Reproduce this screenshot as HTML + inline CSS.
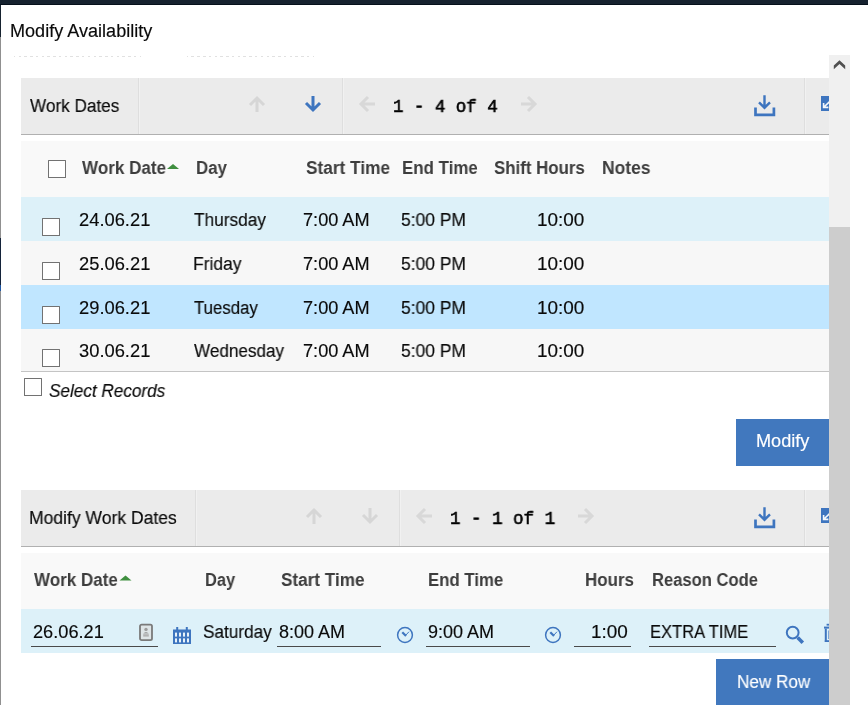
<!DOCTYPE html>
<html>
<head>
<meta charset="utf-8">
<title>Modify Availability</title>
<style>
*{box-sizing:border-box;margin:0;padding:0}
html,body{width:868px;height:705px;overflow:hidden;background:#fff}
body{position:relative;font-family:"Liberation Sans",sans-serif;color:#161616;font-size:18px}
.a{position:absolute}
.t{position:absolute;white-space:nowrap;line-height:20px;height:20px;transform-origin:0 0;will-change:transform;font-size:18px}
.r{color:#0a0a0a;-webkit-text-stroke:0.15px #0a0a0a}
.b{font-weight:bold;color:#3d3d3d}
.i{font-style:italic;color:#0a0a0a;-webkit-text-stroke:0.15px #0a0a0a}
.w{color:#fff;-webkit-text-stroke:0.15px #fff}
.m{font-family:"Liberation Mono",monospace;-webkit-text-stroke:0.6px #000;color:#000}
.cb{position:absolute;width:18px;height:18px;border:1px solid #727272;background:#fff;border-radius:0.5px}
.tb{position:absolute;left:21px;width:808px;height:57px;background:#ebebeb;border-bottom:1px solid #b0b0b0}
.sep{position:absolute;width:2px;background:#f1f1f1;border-left:1px solid #dedede;top:0;height:56px}
.hd{position:absolute;left:21px;width:808px;height:56px;background:#f9f9f9}
.row{position:absolute;left:21px;width:808px;height:44px}
.ul{position:absolute;height:1px;background:#4a4a4a}
.btn{position:absolute;background:#4178be}
svg{position:absolute;left:0;top:0;overflow:visible}
</style>
</head>
<body>
<!-- top bar + left edge -->
<div class="a" style="left:0;top:0;width:868px;height:5px;background:#16222f;border-bottom:1px solid #06101b"></div>
<div class="a" style="left:0;top:5px;width:1px;height:700px;background:#909090"></div>
<div class="a" style="left:0;top:5px;width:1px;height:32px;background:#16222f"></div>
<div class="a" style="left:0;top:238px;width:1px;height:53px;background:#14233a"></div><div class="a" style="left:0;top:285px;width:1px;height:6px;background:#1f57a4"></div>

<div class="a" style="left:14px;top:56px;width:127px;height:1px;background:repeating-linear-gradient(90deg,#e1e1e1 0,#e1e1e1 1.2px,transparent 1.2px,transparent 4.5px,#e1e1e1 4.5px,#e1e1e1 5.77px)"></div>
<div class="a" style="left:187px;top:56px;width:127px;height:1px;background:repeating-linear-gradient(90deg,#e1e1e1 0,#e1e1e1 1.2px,transparent 1.2px,transparent 4.5px,#e1e1e1 4.5px,#e1e1e1 5.77px)"></div>

<!-- toolbar 1 -->
<div class="tb" style="top:78px">
  <div class="sep" style="left:117px"></div>
  <div class="sep" style="left:321px"></div>
  <div class="sep" style="left:783px"></div>
</div>

<!-- header 1 -->
<div class="hd" style="top:141px"></div>
<div class="cb" style="left:48px;top:160px"></div>

<!-- rows -->
<div class="row" style="top:197px;background:#ddf1f9"></div>
<div class="row" style="top:241px;background:#f7f7f7"></div>
<div class="row" style="top:285px;background:#c0e6ff"></div>
<div class="row" style="top:329px;height:43px;background:#f7f7f7;border-bottom:1px solid #c4c4c4"></div>

<div class="cb" style="left:42px;top:218px"></div>
<div class="cb" style="left:42px;top:262px"></div>
<div class="cb" style="left:42px;top:306px"></div>
<div class="cb" style="left:42px;top:349px"></div>
<div class="cb" style="left:24px;top:378px"></div>

<div class="btn" style="left:736px;top:419px;width:93px;height:47px"></div>

<!-- toolbar 2 -->
<div class="tb" style="top:490px">
  <div class="sep" style="left:174px"></div>
  <div class="sep" style="left:378px"></div>
  <div class="sep" style="left:783px"></div>
</div>

<!-- header 2 -->
<div class="hd" style="top:553px"></div>

<div class="row" style="top:609px;background:#ddf1f9"></div>
<div class="ul" style="left:31px;top:646px;width:127px"></div>
<div class="ul" style="left:277px;top:646px;width:104px"></div>
<div class="ul" style="left:426px;top:646px;width:104px"></div>
<div class="ul" style="left:574px;top:646px;width:57px"></div>
<div class="ul" style="left:649px;top:646px;width:127px"></div>

<div class="btn" style="left:716px;top:659px;width:113px;height:46px"></div>

<div class="t r" style="left:10.20px;top:21.00px;transform:scaleX(1.0043)">Modify Availability</div>
<div class="t r" style="left:30.00px;top:96.00px;transform:scaleX(0.9521)">Work Dates</div>
<div class="t m" style="left:392.73px;top:96.00px;transform:scale(0.9692,1.067)">1 - 4 of 4</div>
<div class="t b" style="left:81.50px;top:158.00px;transform:scaleX(0.9466)">Work Date</div>
<div class="t b" style="left:196.06px;top:158.00px;transform:scaleX(0.9375)">Day</div>
<div class="t b" style="left:305.75px;top:158.00px;transform:scaleX(0.9574)">Start Time</div>
<div class="t b" style="left:402.06px;top:158.00px;transform:scaleX(0.9375)">End Time</div>
<div class="t b" style="left:493.75px;top:158.00px;transform:scaleX(0.9356)">Shift Hours</div>
<div class="t b" style="left:602.03px;top:158.00px;transform:scaleX(0.9694)">Notes</div>
<div class="t r" style="left:79.25px;top:210.00px;transform:scaleX(1.0179)">24.06.21</div>
<div class="t r" style="left:194.25px;top:210.00px;transform:scaleX(0.9600)">Thursday</div>
<div class="t r" style="left:303.25px;top:210.00px;transform:scaleX(1.0077)">7:00 AM</div>
<div class="t r" style="left:400.50px;top:210.00px;transform:scaleX(0.9697)">5:00 PM</div>
<div class="t r" style="left:536.95px;top:210.00px;transform:scaleX(1.0511)">10:00</div>
<div class="t r" style="left:79.25px;top:254.00px;transform:scaleX(1.0179)">25.06.21</div>
<div class="t r" style="left:193.28px;top:254.00px;transform:scaleX(0.9694)">Friday</div>
<div class="t r" style="left:303.25px;top:254.00px;transform:scaleX(1.0077)">7:00 AM</div>
<div class="t r" style="left:400.50px;top:254.00px;transform:scaleX(0.9697)">5:00 PM</div>
<div class="t r" style="left:536.95px;top:254.00px;transform:scaleX(1.0511)">10:00</div>
<div class="t r" style="left:79.25px;top:298.00px;transform:scaleX(1.0179)">29.06.21</div>
<div class="t r" style="left:194.25px;top:298.00px;transform:scaleX(0.9348)">Tuesday</div>
<div class="t r" style="left:303.25px;top:298.00px;transform:scaleX(1.0077)">7:00 AM</div>
<div class="t r" style="left:400.50px;top:298.00px;transform:scaleX(0.9697)">5:00 PM</div>
<div class="t r" style="left:536.95px;top:298.00px;transform:scaleX(1.0511)">10:00</div>
<div class="t r" style="left:79.25px;top:341.00px;transform:scaleX(1.0179)">30.06.21</div>
<div class="t r" style="left:194.25px;top:341.00px;transform:scaleX(0.9500)">Wednesday</div>
<div class="t r" style="left:303.25px;top:341.00px;transform:scaleX(1.0077)">7:00 AM</div>
<div class="t r" style="left:400.50px;top:341.00px;transform:scaleX(0.9697)">5:00 PM</div>
<div class="t r" style="left:536.95px;top:341.00px;transform:scaleX(1.0511)">10:00</div>
<div class="t i" style="left:48.75px;top:381.00px;transform:scaleX(0.9529)">Select Records</div>
<div class="t w" style="left:756.39px;top:431.00px;transform:scaleX(1.0077)">Modify</div>
<div class="t r" style="left:29.03px;top:508.00px;transform:scaleX(0.9735)">Modify Work Dates</div>
<div class="t m" style="left:449.73px;top:508.00px;transform:scale(0.9738,1.067)">1 - 1 of 1</div>
<div class="t b" style="left:34.25px;top:570.00px;transform:scaleX(0.9438)">Work Date</div>
<div class="t b" style="left:204.84px;top:570.00px;transform:scaleX(0.9141)">Day</div>
<div class="t b" style="left:280.75px;top:570.00px;transform:scaleX(0.9517)">Start Time</div>
<div class="t b" style="left:428.32px;top:570.00px;transform:scaleX(0.9313)">End Time</div>
<div class="t b" style="left:584.81px;top:570.00px;transform:scaleX(0.9412)">Hours</div>
<div class="t b" style="left:651.58px;top:570.00px;transform:scaleX(0.9211)">Reason Code</div>
<div class="t r" style="left:33.00px;top:622.00px;transform:scaleX(1.0107)">26.06.21</div>
<div class="t r" style="left:203.00px;top:622.00px;transform:scaleX(0.9549)">Saturday</div>
<div class="t r" style="left:279.25px;top:622.00px;transform:scaleX(1.0000)">8:00 AM</div>
<div class="t r" style="left:427.50px;top:622.00px;transform:scaleX(1.0000)">9:00 AM</div>
<div class="t r" style="left:591.45px;top:622.00px;transform:scaleX(1.0515)">1:00</div>
<div class="t r" style="left:649.58px;top:622.00px;transform:scaleX(0.9198)">EXTRA TIME</div>
<div class="t w" style="left:736.55px;top:672.00px;transform:scaleX(0.9513)">New Row</div>

<!-- icons -->
<svg width="868" height="705" viewBox="0 0 868 705">
  <defs>
    <g id="arr"><path d="M0 -8V6M-7 -1L0 6L7 -1" fill="none" stroke-width="3" stroke-linejoin="miter"/></g>
    <g id="dl"><path d="M-9 3V10.3H9.4V3" fill="none" stroke-width="2.7"/><path d="M0 -9.3V3M-5.5 -2.2L0 3.2L5.5 -2.2" fill="none" stroke-width="2.4"/></g>
    <g id="clk"><circle cx="0" cy="0" r="7.4" fill="none" stroke-width="1.5"/><path d="M1 1L-2.7 -2.7" stroke-width="2.2" fill="none"/><path d="M0.4 0.6L4 -3.3" stroke-width="1" fill="none"/></g>
    <g id="sort"><path d="M0 5L6 0L12 5Z" fill="#3f8f3f"/></g>
    <g id="exp"><rect x="0" y="0" width="10" height="15" fill="#3e75bf"/><path d="M2.6 7V11.4H7.4M3 11L8.6 5.6" fill="none" stroke="#f4f7fb" stroke-width="1.6"/></g>
  </defs>
  <!-- toolbar 1 arrows -->
  <use href="#arr" transform="translate(257,104) rotate(180)" stroke="#d6d6d6"/>
  <use href="#arr" transform="translate(313,104)" stroke="#3e75bf"/>
  <use href="#arr" transform="translate(367,104) rotate(90)" stroke="#d8d8d8"/>
  <use href="#arr" transform="translate(529,104) rotate(-90)" stroke="#d8d8d8"/>
  <use href="#dl" transform="translate(764.5,104.5)" stroke="#3e75bf"/>
  <use href="#sort" transform="translate(167,164)"/>
  <!-- toolbar 2 arrows -->
  <use href="#arr" transform="translate(314,516) rotate(180)" stroke="#d6d6d6"/>
  <use href="#arr" transform="translate(370,516)" stroke="#d6d6d6"/>
  <use href="#arr" transform="translate(424,516) rotate(90)" stroke="#d8d8d8"/>
  <use href="#arr" transform="translate(586,516) rotate(-90)" stroke="#d8d8d8"/>
  <use href="#dl" transform="translate(764.5,516.5)" stroke="#3e75bf"/>
  <use href="#sort" transform="translate(119.5,575.5)"/>
  <!-- export icons (clipped by scrollbar) -->
  <use href="#exp" transform="translate(821,96)"/>
  <use href="#exp" transform="translate(821,508)"/>
  <!-- row icons -->
  <use href="#clk" transform="translate(405,635)" stroke="#3e75bf"/>
  <use href="#clk" transform="translate(553,635)" stroke="#3e75bf"/>
  <!-- calendar -->
  <g transform="translate(173,627)">
    <rect x="0" y="2.5" width="18" height="14.5" fill="#3e75bf"/>
    <rect x="3.2" y="0" width="2" height="4" fill="#3e75bf"/><rect x="12.8" y="0" width="2" height="4" fill="#3e75bf"/>
    <g fill="#e8f2fa">
      <rect x="2" y="5.6" width="2" height="4"/><rect x="6" y="5.6" width="2" height="4"/><rect x="10" y="5.6" width="2" height="4"/><rect x="14" y="5.6" width="2" height="4"/>
      <rect x="2" y="11.4" width="2" height="4"/><rect x="6" y="11.4" width="2" height="4"/><rect x="10" y="11.4" width="2" height="4"/><rect x="14" y="11.4" width="2" height="4"/>
    </g>
  </g>
  <!-- contacts autofill icon -->
  <g transform="translate(139,623.6)">
    <rect x="1" y="1" width="12" height="15.6" rx="1.6" fill="#dfe5e7" stroke="#7a7a7a" stroke-width="1.8"/>
    <circle cx="7" cy="5.8" r="1.7" fill="#9c9c9c"/><path d="M4.2 10q2.8 -3.4 5.6 0z" fill="#9c9c9c"/>
    <rect x="4.2" y="10.6" width="5.6" height="2.4" fill="#b2b2b2"/>
  </g>
  <!-- search -->
  <circle cx="792.7" cy="632.6" r="5.9" fill="none" stroke="#3e75bf" stroke-width="2"/>
  <path d="M797.6 637.6L802.8 642.8" stroke="#3e75bf" stroke-width="3.6" fill="none"/>
  <!-- trash (clipped) -->
  <rect x="826.6" y="623.8" width="4" height="1.8" fill="#3e75bf"/>
  <rect x="824" y="626.6" width="8" height="2" fill="#3e75bf"/>
  <rect x="824.8" y="628.6" width="2" height="13.4" fill="#3e75bf"/>
  <rect x="824.8" y="640.2" width="8" height="1.8" fill="#3e75bf"/>
  <rect x="828.4" y="630.5" width="1.4" height="8.5" fill="#3e75bf"/>
</svg>

<!-- scrollbar -->
<div class="a" style="left:829px;top:55px;width:21px;height:650px;background:#f0f0f0"></div>
<div class="a" style="left:829px;top:227px;width:21px;height:478px;background:#cdcdcd"></div>
<div class="a" style="left:850px;top:5px;width:18px;height:700px;background:#fff"></div>
<svg width="868" height="705" viewBox="0 0 868 705"><path d="M839.5 60.2L845.2 65.6V69.2L839.5 64L833.8 69.2V65.6Z" fill="#505050"/></svg>
</body>
</html>
